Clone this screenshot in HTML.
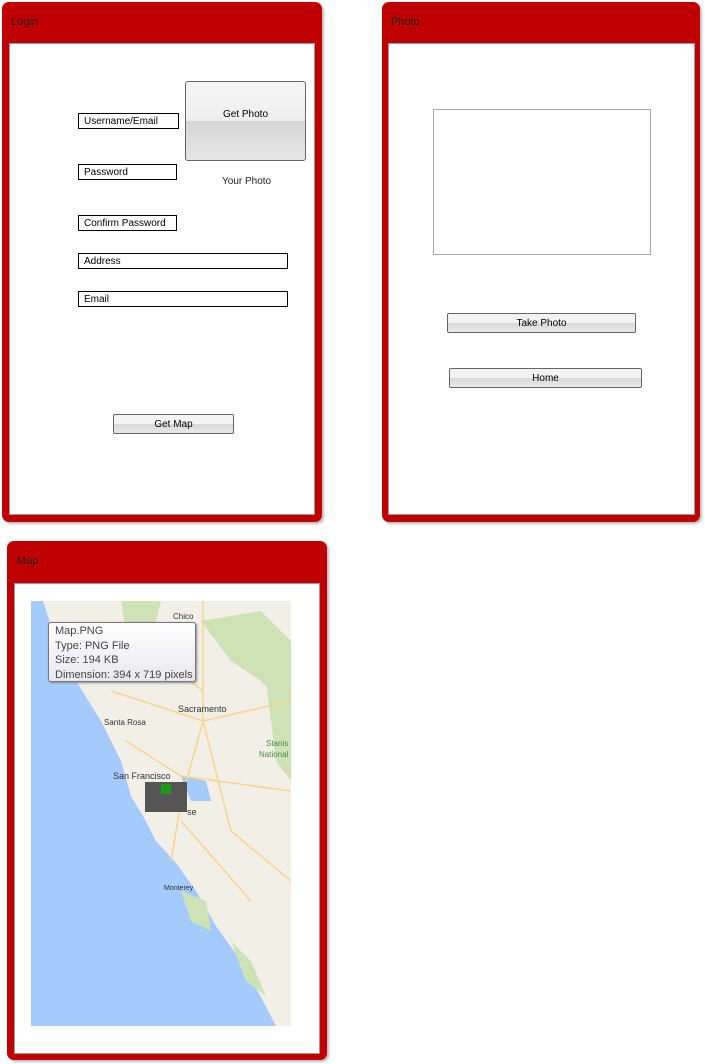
<!DOCTYPE html>
<html><head><style>
body{margin:0;width:705px;height:1064px;background:#fff;font-family:"Liberation Sans",sans-serif;position:relative;overflow:hidden}
.fr{position:absolute;background:#c00000;border-radius:7px;box-shadow:2px 2px 2px #bbb}
.in{position:absolute;background:#fff;border:1px solid #999}
.t{position:absolute;font-size:11px;color:#222}
.box{position:absolute;border:1px solid #000;font-size:10px;padding-left:5px;line-height:15px;box-sizing:border-box;background:#fff}
.btn{position:absolute;border:1px solid #666;border-radius:2px;background:linear-gradient(#f3f3f3 50%,#d8d8d8 50%,#e8e8e8);font-size:10px;text-align:center;box-sizing:border-box}
</style></head><body>
<div class="fr" style="left:2px;top:2px;width:320px;height:520px"></div>
<div class="t" style="left:11px;top:16px">Login</div>
<div class="in" style="left:9px;top:43px;width:304px;height:470px"></div>
<div class="box" style="left:78px;top:113px;width:101px;height:16px">Username/Email</div>
<div class="box" style="left:78px;top:164px;width:99px;height:16px">Password</div>
<div class="box" style="left:78px;top:215px;width:99px;height:16px">Confirm Password</div>
<div class="box" style="left:78px;top:253px;width:210px;height:16px">Address</div>
<div class="box" style="left:78px;top:291px;width:210px;height:16px">Email</div>
<div class="btn" style="left:185px;top:81px;width:121px;height:80px;line-height:66px;border-radius:3px;background:linear-gradient(#f5f5f5,#eee 50%,#d5d5d5 50%,#e6e6e6)">Get Photo</div>
<div class="t" style="left:222px;top:176px;font-size:10px">Your Photo</div>
<div class="btn" style="left:113px;top:414px;width:121px;height:20px;line-height:19px">Get Map</div>

<div class="fr" style="left:382px;top:2px;width:318px;height:520px"></div>
<div class="t" style="left:391px;top:16px">Photo</div>
<div class="in" style="left:388px;top:43px;width:305px;height:470px"></div>
<div style="position:absolute;left:433px;top:109px;width:216px;height:144px;border:1px solid #aaa"></div>
<div class="btn" style="left:447px;top:313px;width:189px;height:20px;line-height:19px">Take Photo</div>
<div class="btn" style="left:449px;top:368px;width:193px;height:20px;line-height:19px">Home</div>

<div class="fr" style="left:7px;top:541px;width:320px;height:519px"></div>
<div class="t" style="left:17px;top:555px">Map</div>
<div class="in" style="left:14px;top:583px;width:304px;height:469px"></div>
<svg style="position:absolute;left:31px;top:601px" width="260" height="425">
<rect width="260" height="425" fill="#a4cbfb"/>
<path d="M12,0 L260,0 L260,425 L245,425 L232,400 L210,360 L185,325 L165,290 L145,262 L125,240 L112,215 L100,195 L90,160 L70,120 L45,80 L25,40 Z" fill="#f2efe6"/>
<path d="M90,0 L130,0 L120,40 L95,30 Z M170,20 L230,10 L260,40 L260,110 L230,80 L200,60 Z M235,80 L260,90 L260,180 L245,160 Z M150,290 L175,300 L180,330 L160,320 Z M200,340 L220,360 L235,395 L215,380 Z" fill="#cde3b5"/>
<path d="M150,175 L175,180 L180,200 L160,200 Z" fill="#a4cbfb"/>
<g stroke="#fbd38c" stroke-width="1.5" fill="none">
<path d="M172,0 L172,120 L150,200 L140,260 M80,90 L172,120 L260,100 M95,140 L150,175 L260,190 M172,120 L200,230 L260,280 M150,220 L220,300 M120,50 L172,90"/>
</g>
<text x="142" y="18" font-size="8" fill="#333" font-family="Liberation Sans">Chico</text>
<text x="147" y="111" font-size="9" fill="#333" font-family="Liberation Sans">Sacramento</text>
<text x="73" y="124" font-size="8" fill="#333" font-family="Liberation Sans">Santa Rosa</text>
<text x="82" y="178" font-size="9" fill="#333" font-family="Liberation Sans">San Francisco</text>
<text x="133" y="289" font-size="7" fill="#333" font-family="Liberation Sans">Monterey</text>
<text x="235" y="145" font-size="8" fill="#4a8a4a" font-family="Liberation Sans">Stanis</text>
<text x="228" y="156" font-size="8" fill="#4a8a4a" font-family="Liberation Sans">National</text>
<rect x="114" y="181" width="42" height="30" fill="#555"/>
<rect x="130" y="183" width="10" height="10" fill="#1a9a1a"/>
<text x="156" y="214" font-size="9" fill="#333" font-family="Liberation Sans">se</text>
</svg>
<div style="position:absolute;left:48px;top:622px;width:148px;height:60px;border:1px solid #777;border-radius:3px;background:linear-gradient(#fff,#e8e8f0);box-shadow:1px 1px 2px #888;font-size:11px;color:#444;line-height:14.5px;padding:1px 0 0 6px;box-sizing:border-box">Map.PNG<br>Type: PNG File<br>Size: 194 KB<br>Dimension: 394 x 719 pixels</div>
</body></html>
